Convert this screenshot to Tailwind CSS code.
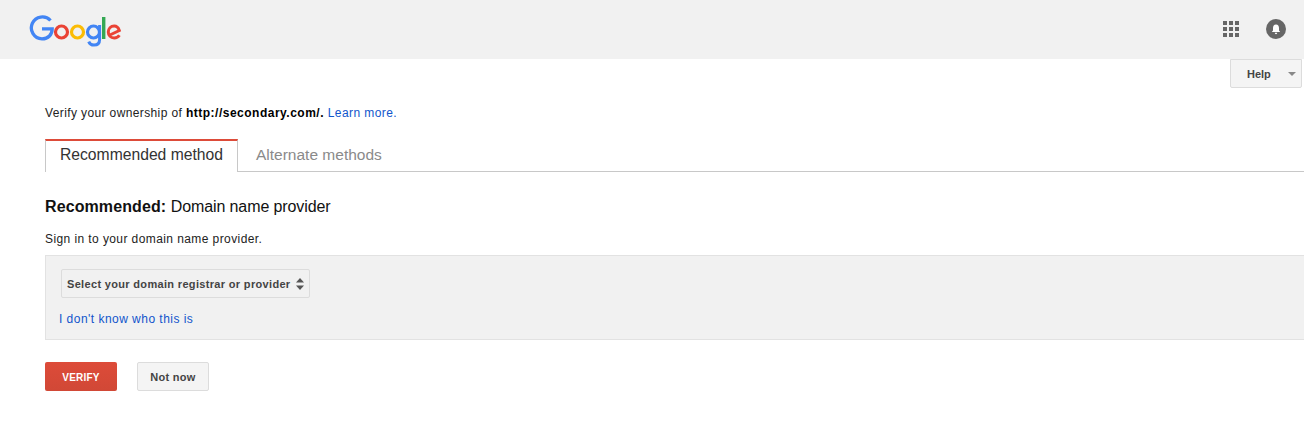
<!DOCTYPE html>
<html lang="en">
<head>
    <meta charset="UTF-8">
    <title>Verify ownership</title>
    <script src="https://cdn.jsdelivr.net/npm/@tailwindcss/browser@4"></script>
</head>
<body class="bg-white font-['Liberation_Sans',Arial,sans-serif] text-[#222] overflow-hidden">
    <!-- Top bar -->
    <header class="h-[59px] bg-[#f1f1f1] flex items-center justify-between pl-[29px] pr-[18px]">
        <svg class="w-[94px] h-[59px]" viewBox="29 0 94 59" role="img" aria-label="Google" fill="none">
            <path d="M50.5 20.5A11 11 0 1 0 42 38.9c6.3 0 10.2-4.3 10.2-10.1H42" stroke="#4285f4" stroke-width="3.3"/>
            <circle cx="61.5" cy="32" r="6" stroke="#ea4335" stroke-width="3.2"/>
            <circle cx="77.5" cy="32" r="6" stroke="#fbbc05" stroke-width="3.2"/>
            <circle cx="93.5" cy="32" r="6" stroke="#4285f4" stroke-width="3.2"/>
            <path d="M99.6 25v14.5c0 3.8-2.4 5.6-5.6 5.6-2.4 0-4.4-1.3-5.3-3.5" stroke="#4285f4" stroke-width="3"/>
            <rect x="102" y="17" width="3.4" height="22" fill="#34a853"/>
            <path d="M108.800 35.500L119.300 30.500C118.300 27.400 116.500 26 114.200 26C110.800 26 108.300 28.600 108.300 32C108.300 35.500 110.800 38 114.200 38C116.500 38 118.300 36.900 119.400 35.200" stroke="#ea4335" stroke-width="3"/>
        </svg>
        <div class="flex items-center gap-[27px] mb-[1px]">
            <div class="grid grid-cols-3 gap-[2px]">
                <span class="w-[4px] h-[4px] bg-[#666]"></span><span class="w-[4px] h-[4px] bg-[#666]"></span><span class="w-[4px] h-[4px] bg-[#666]"></span>
                <span class="w-[4px] h-[4px] bg-[#666]"></span><span class="w-[4px] h-[4px] bg-[#666]"></span><span class="w-[4px] h-[4px] bg-[#666]"></span>
                <span class="w-[4px] h-[4px] bg-[#666]"></span><span class="w-[4px] h-[4px] bg-[#666]"></span><span class="w-[4px] h-[4px] bg-[#666]"></span>
            </div>
            <div class="w-[20px] h-[20px] rounded-full bg-[#666] flex items-center justify-center">
                <svg class="w-[10px] h-[11px]" viewBox="0 0 10 11" fill="#fff"><path d="M5 0.500C2.900 0.500 2 2.200 2 4V6.500L0.800 8H9.200L8 6.500V4C8 2.200 7.100 0.500 5 0.500Z"/><path d="M3.800 8.800H6.200C6.200 9.600 5.700 10.200 5 10.200C4.300 10.200 3.800 9.600 3.800 8.800Z"/></svg>
            </div>
        </div>
    </header>

    <!-- Help -->
    <div class="flex justify-end pr-[2px]">
        <div class="w-[72px] h-[29px] -mb-[29px] relative z-10 flex items-center justify-between pl-[16px] pr-[5px] pt-[1px] bg-[#f4f4f4] border border-[#dcdcdc] rounded-b-[2px]">
            <span class="text-[11px] font-bold text-[#444]">Help</span>
            <span class="w-0 h-0 border-x-[4px] border-x-transparent border-t-[4px] border-t-[#888]"></span>
        </div>
    </div>

    <main class="pt-[47px] pl-[45px]">
        <p class="text-[12px] leading-[14px] tracking-[0.38px] text-[#222]">Verify your ownership of <b class="text-black tracking-[0.5px]">http://secondary.com/.</b> <a href="#" class="text-[#1155cc] tracking-[0.42px]">Learn more.</a></p>

        <!-- Tabs -->
        <div class="mt-[19px] flex border-b border-[#c8c8c8] h-[33px]">
            <div class="w-[193px] h-[33px] pb-[3px] bg-white border-x border-[#c8c8c8] border-t-2 border-t-[#dd4b39] flex items-center justify-center text-[15.700px] text-[#333]">Recommended method</div>
            <div class="pl-[18px] flex items-center text-[15.500px] text-[#8a8a8a]">Alternate methods</div>
        </div>

        <h2 class="mt-[25px] text-[16px] leading-[19px] text-[#111]"><b class="tracking-[0.1px]">Recommended:</b> <span class="tracking-[-0.1px]">Domain name provider</span></h2>
        <p class="mt-[16px] text-[12px] leading-[14px] tracking-[0.41px]">Sign in to your domain name provider.</p>

        <!-- Provider box -->
        <section class="mt-[9px] h-[85px] bg-[#f1f1f1] border-y border-l border-[#e2e2e2] pt-[13px] pl-[15px]">
            <div class="w-[249px] h-[29px] flex items-center justify-between pl-[5px] pr-[5px] pt-[1px] bg-[#f1f1f1] border border-[#dcdcdc] rounded-[2px]">
                <span class="text-[11px] font-bold tracking-[0.33px] text-[#444] whitespace-nowrap">Select your domain registrar or provider</span>
                <svg class="w-[8px] h-[12px] -mt-[1px]" viewBox="0 0 8 12" fill="#555"><path d="M4 0L8 4.500H0Z"/><path d="M4 12L8 7.500H0Z"/></svg>
            </div>
            <a href="#" class="block mt-[14px] -ml-[2px] text-[12px] leading-[14px] tracking-[0.47px] text-[#1155cc]">I don't know who this is</a>
        </section>

        <!-- Actions -->
        <div class="mt-[22px] flex gap-[20px]">
            <button class="w-[72px] h-[29px] pt-[1px] bg-gradient-to-b from-[#dd4b39] to-[#d14836] rounded-[2px] text-[10px] tracking-[0.2px] font-bold text-white">VERIFY</button>
            <button class="w-[72px] h-[29px] pt-[1px] bg-[#f4f4f4] border border-[#dcdcdc] rounded-[2px] text-[11px] font-bold tracking-[0.3px] text-[#444]">Not now</button>
        </div>
    </main>
</body>
</html>
